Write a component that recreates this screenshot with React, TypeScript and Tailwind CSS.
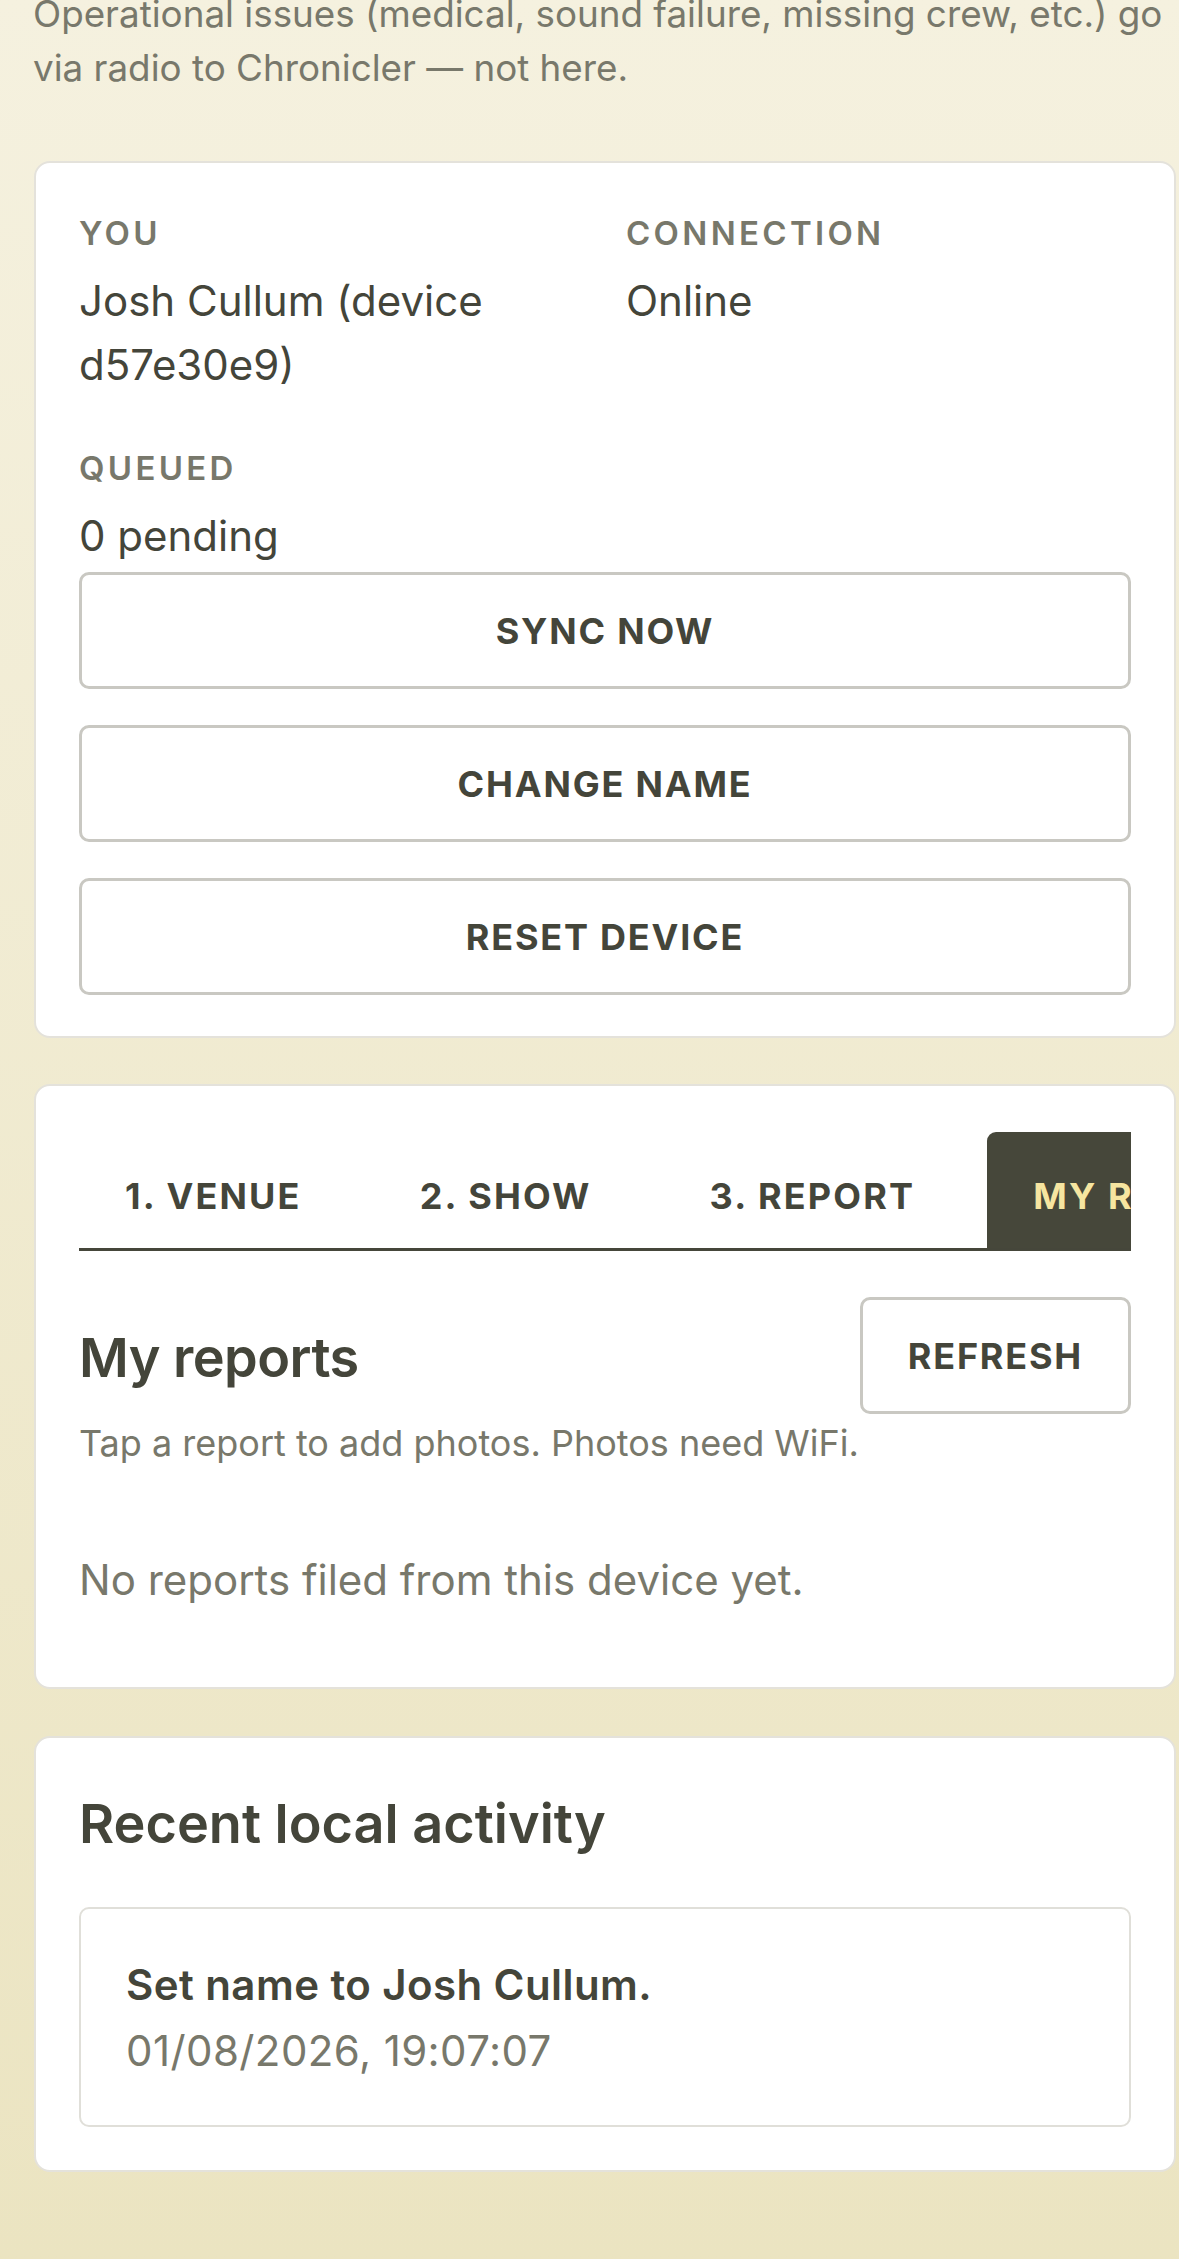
import React from "react";

const labelCls =
  "text-[33px] leading-[50px] font-semibold tracking-[0.1em] uppercase text-[#78786b]";
const valueCls = "mt-[11px] text-[42px] leading-[64px] text-[#44453a]";
const btnCls =
  "h-[117px] w-full rounded-[10px] border-[3px] border-[#c9c8c2] bg-white text-[36px] font-bold tracking-[0.05em] text-[#44453a] uppercase";

function Tab({ label, active }: { label: string; active?: boolean }) {
  return (
    <div
      className={
        "flex h-[116px] items-center whitespace-nowrap px-[46px] pt-[12px] text-[36px] font-bold tracking-[0.06em] " +
        (active
          ? "rounded-t-[9px] bg-[#46473a] text-[#f6e5a0]"
          : "text-[#44453a]")
      }
    >
      {label}
    </div>
  );
}

export default function App() {
  return (
    <div className="min-h-[2259px] overflow-hidden bg-linear-to-b from-[#f5f1df] to-[#ebe4c1] font-['Inter','Noto_Sans',sans-serif] text-[#44453a]">
      <div className="pl-[34px] pr-[3px]">
        <p className="-ml-[1px] -mt-[13px] whitespace-nowrap text-[36.8px] leading-[54px] text-[#78786b]">
          Operational issues (medical, sound failure, missing crew, etc.) go
          <br />
          via radio to Chronicler — not here.
        </p>

        {/* Card 1 */}
        <section className="mt-[66px] rounded-2xl border-2 border-[#e4e2db] bg-white px-[43px] pt-[45px] pb-[41px]">
          <div className="grid grid-cols-2 gap-x-[42px] gap-y-[46px]">
            <div>
              <div className={labelCls}>You</div>
              <div className={valueCls}>Josh Cullum (device d57e30e9)</div>
            </div>
            <div>
              <div className={labelCls}>Connection</div>
              <div className={valueCls}>Online</div>
            </div>
            <div>
              <div className={labelCls}>Queued</div>
              <div className={valueCls}>0 pending</div>
            </div>
          </div>
          <div className="mt-[4px] flex flex-col gap-[36px]">
            <button className={btnCls}>Sync now</button>
            <button className={btnCls}>Change name</button>
            <button className={btnCls}>Reset device</button>
          </div>
        </section>

        {/* Card 2 */}
        <section className="mt-[46px] rounded-2xl border-2 border-[#e4e2db] bg-white px-[43px] pt-[46px] pb-[75px]">
          <div className="overflow-hidden">
            <div className="flex w-max gap-[26px] border-b-[3px] border-[#45463a]">
              <Tab label="1. VENUE" />
              <Tab label="2. SHOW" />
              <Tab label="3. REPORT" />
              <Tab label="MY REPORTS" active />
            </div>
          </div>
          <div className="mt-[46px] flex items-center justify-between">
            <h2 className="pt-[5px] text-[54px] leading-[70px] font-semibold tracking-[-0.01em] text-[#44453a]">
              My reports
            </h2>
            <button className="h-[117px] rounded-[10px] border-[3px] border-[#c9c8c2] bg-white px-[45px] text-[36px] font-bold tracking-[0.05em] text-[#44453a]">
              REFRESH
            </button>
          </div>
          <p className="mt-[4px] text-[36px] leading-[51px] text-[#78786b]">
            Tap a report to add photos. Photos need WiFi.
          </p>
          <p className="mt-[79px] text-[42px] leading-[64px] text-[#78786b]">
            No reports filed from this device yet.
          </p>
        </section>

        {/* Card 3 */}
        <section className="mt-[47px] rounded-2xl border-2 border-[#e4e2db] bg-white px-[43px] pt-[51px] pb-[43px]">
          <h2 className="text-[54px] leading-[70px] font-semibold text-[#44453a]">
            Recent local activity
          </h2>
          <div className="mt-[48px] rounded-[10px] border-2 border-[#e0dfd9] bg-white px-[45px] pt-[48px] pb-[46px]">
            <div className="text-[42px] leading-[56px] font-semibold tracking-[0.01em] text-[#44453a]">
              Set name to Josh Cullum.
            </div>
            <div className="mt-[10px] text-[42px] leading-[56px] tracking-[0.01em] text-[#78786b]">
              01/08/2026, 19:07:07
            </div>
          </div>
        </section>
      </div>
    </div>
  );
}
